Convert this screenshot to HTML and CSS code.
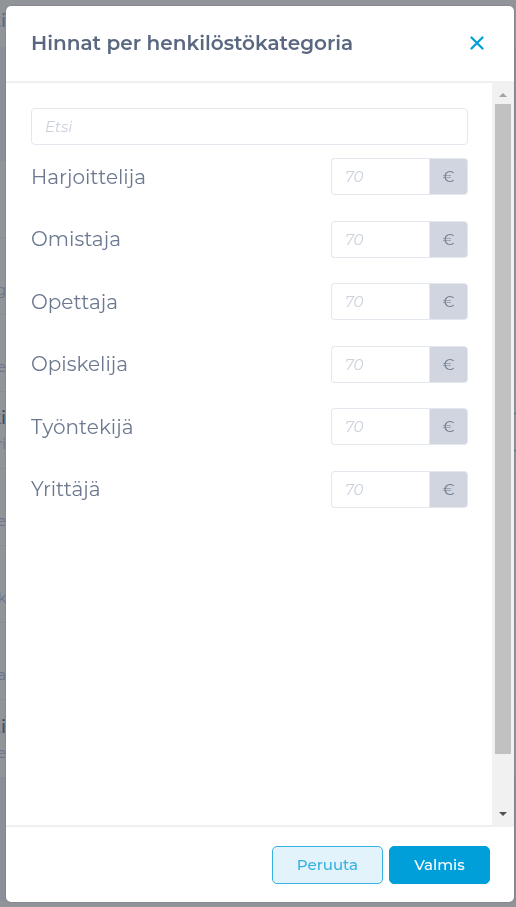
FILE: index.html
```html
<!DOCTYPE html>
<html lang="fi">
<head>
<meta charset="utf-8">
<meta name="viewport" content="width=device-width, initial-scale=1">
<title>Hinnat per henkilöstökategoria</title>
<link rel="stylesheet" href="styles.css">
</head>
<body>
<div class="page" aria-hidden="true">
  <div class="page-top"><span class="strong">ti</span></div>
  <div class="page-band"></div>
  <div class="page-row"></div>
  <div class="page-row"><span>g</span></div>
  <div class="page-row"><span>e</span></div>
  <div class="page-row with-button"><span class="strong">ki</span><span>ri</span><div class="page-button"></div></div>
  <div class="page-row"><span>e</span></div>
  <div class="page-row"><span>k</span></div>
  <div class="page-row"><span>a</span></div>
  <div class="page-row last"><span class="strong">ti</span><span>e</span></div>
  <div class="page-foot"></div>
</div>
<div class="overlay">
  <form class="modal" role="dialog" aria-labelledby="modal-title">
    <header class="modal-header">
      <h1 id="modal-title">Hinnat per henkilöstökategoria</h1>
      <button class="close" type="button" aria-label="Sulje">
        <svg viewBox="0 0 14 14" width="14" height="14"><path d="M1.5 1.5 12.5 12.5M12.5 1.5 1.5 12.5" fill="none" stroke="currentColor" stroke-width="2.3" stroke-linecap="round"/></svg>
      </button>
    </header>
    <div class="modal-body">
      <div class="content">
        <input class="search" type="text" placeholder="Etsi" aria-label="Etsi">
        <div class="prices">
          <div class="price"><label for="p1">Harjoittelija</label><div class="group"><input id="p1" type="text" placeholder="70"><span class="unit">€</span></div></div>
          <div class="price"><label for="p2">Omistaja</label><div class="group"><input id="p2" type="text" placeholder="70"><span class="unit">€</span></div></div>
          <div class="price"><label for="p3">Opettaja</label><div class="group"><input id="p3" type="text" placeholder="70"><span class="unit">€</span></div></div>
          <div class="price"><label for="p4">Opiskelija</label><div class="group"><input id="p4" type="text" placeholder="70"><span class="unit">€</span></div></div>
          <div class="price"><label for="p5">Työntekijä</label><div class="group"><input id="p5" type="text" placeholder="70"><span class="unit">€</span></div></div>
          <div class="price"><label for="p6">Yrittäjä</label><div class="group"><input id="p6" type="text" placeholder="70"><span class="unit">€</span></div></div>
        </div>
      </div>
      <div class="scrollbar" aria-hidden="true">
        <svg class="arrow up" viewBox="0 0 8 4" width="8" height="4"><path d="M0 4 4 0 8 4Z" fill="currentColor"/></svg>
        <div class="track"><div class="thumb"></div></div>
        <svg class="arrow down" viewBox="0 0 8 4" width="8" height="4"><path d="M0 0H8L4 4Z" fill="currentColor"/></svg>
      </div>
    </div>
    <footer class="modal-footer">
      <button class="btn secondary" type="button">Peruuta</button>
      <button class="btn primary" type="submit">Valmis</button>
    </footer>
  </form>
</div>
</body>
</html>
```

FILE: styles.css
```css
* {
  box-sizing: border-box;
}

body {
  margin: 0;
  height: 100vh;
  overflow: hidden;
  background: #919499;
  color: #5a6780;
  font-family: Montserrat, Inter, "Liberation Sans", sans-serif;
}

.page {
  display: flex;
  flex-direction: column;
  height: 100vh;
  color: #69738a;
  font-size: 14px;
  line-height: 20px;
}

.page span {
  display: flex;
  justify-content: flex-end;
  width: 6px;
  overflow: hidden;
}

.page .strong {
  color: #414b60;
  font-size: 18px;
  font-weight: 500;
  line-height: 32px;
}

.page-top {
  height: 47px;
  padding-top: 5px;
}

.page-top .strong {
  color: #5a6780;
}

.page-band {
  height: 114px;
  background: #8b8f9a;
}

.page-row {
  position: relative;
  display: flex;
  flex-direction: column;
  justify-content: flex-end;
  height: 77px;
  padding-bottom: 14px;
  border-bottom: 1px solid #898d95;
}

.page-row.last {
  height: 78px;
}

.page-button {
  position: absolute;
  top: 21px;
  right: 0;
  width: 10px;
  height: 38px;
  border: solid #2f7f9b;
  border-width: 1px 0;
}

.page-foot {
  flex: 1;
  margin-bottom: 6px;
  background: #8b8f9a;
}

.overlay {
  position: fixed;
  inset: 0;
  display: flex;
  padding: 6px 2px 5px 6px;
}

.modal {
  display: flex;
  flex: 1;
  flex-direction: column;
  overflow: hidden;
  border-radius: 5px;
  background: #fff;
  box-shadow: 0 0 2px #6f747e;
}

.modal-header {
  display: flex;
  align-items: center;
  justify-content: space-between;
  height: 77px;
  padding: 0 30px 2px 25px;
  border-bottom: 2px solid #eef0f4;
}

h1 {
  margin: 0;
  font-size: 20px;
  font-weight: 600;
  line-height: 28px;
  white-space: nowrap;
}

button {
  font-family: inherit;
  cursor: pointer;
}

.close {
  display: flex;
  padding: 0;
  border: 0;
  background: none;
  color: #009fda;
}

.modal-body {
  display: flex;
  flex: 1;
  min-height: 0;
}

.content {
  flex: 1;
  min-width: 0;
  padding: 25px 24px 0 25px;
}

input {
  min-width: 0;
  height: 37px;
  padding: 0 13px;
  border: 1px solid #e3e7ee;
  border-radius: 4px;
  background: #fff;
  color: #5a6780;
  font-family: inherit;
  font-size: 15px;
}

input::placeholder {
  color: #cbd1dd;
  font-style: italic;
  font-weight: 400;
  opacity: 1;
}

.search {
  display: block;
  width: 100%;
  margin-bottom: 13px;
}

.prices {
  display: flex;
  flex-direction: column;
  justify-content: space-between;
  min-height: 350px;
}

.price {
  display: flex;
  align-items: center;
  justify-content: space-between;
}

label {
  color: #6b7890;
  font-size: 20px;
  font-weight: 400;
  line-height: 36px;
}

.group {
  display: flex;
  width: 137px;
}

.group input {
  flex: 1;
  border-right: 0;
  border-radius: 4px 0 0 4px;
}

.unit {
  display: flex;
  align-items: center;
  justify-content: center;
  width: 39px;
  border: 1px solid #e3e7ee;
  border-radius: 0 4px 4px 0;
  background: #d0d5df;
  color: #707b8d;
  font-size: 15px;
}

.scrollbar {
  display: flex;
  flex-direction: column;
  align-items: center;
  width: 22px;
  padding: 10px 0 9px;
  background: #f1f1f1;
}

.arrow.up {
  color: #a3a3a3;
}

.arrow.down {
  color: #505050;
}

.track {
  flex: 1;
  width: 16px;
  padding: 7px 0 9px;
}

.thumb {
  height: 93%;
  background: #c1c1c1;
}

.modal-footer {
  display: flex;
  align-items: center;
  justify-content: flex-end;
  gap: 6px;
  height: 77px;
  padding: 0 24px 0 0;
  border-top: 2px solid #eef0f4;
}

.btn {
  height: 38px;
  padding: 0 24px;
  border: 1px solid #009fda;
  border-radius: 5px;
  font-size: 15px;
  font-weight: 500;
}

.secondary {
  min-width: 110px;
  border-color: #35b2e0;
  background: #e3f3fb;
  color: #35b2e0;
}

.primary {
  min-width: 101px;
  background: #009fda;
  color: #fff;
}
```
